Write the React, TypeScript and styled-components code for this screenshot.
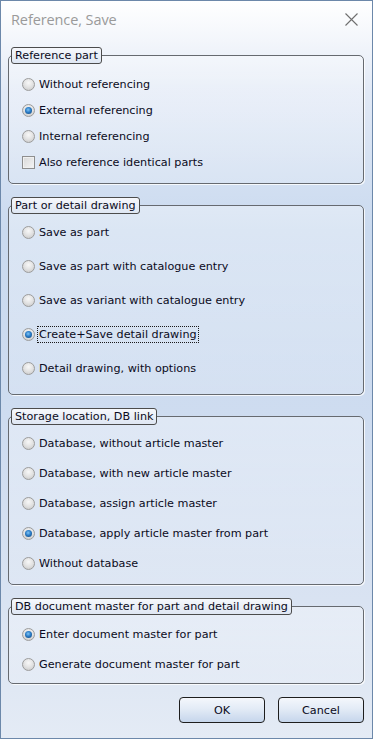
import React, { useState } from 'react'
import styled, { createGlobalStyle } from 'styled-components'

const GlobalStyles = createGlobalStyle`
	html, body {
		margin: 0;
		padding: 0;
		background: #ffffff;
	}
	* {
		box-sizing: border-box;
	}
`

const Window = styled.div`
	width: 373px;
	height: 739px;
	border: 1px solid #6c88aa;
	display: flex;
	flex-direction: column;
	background: linear-gradient(
		to bottom,
		#ffffff 0px,
		#f3f6fb 40px,
		#e1e9f6 90px,
		#cadaef 230px,
		#cedcf0 420px,
		#d9e3f2 600px,
		#e4ebf5 739px
	);
	font-family: 'DejaVu Sans', 'Liberation Sans', sans-serif;
	font-size: 11.2px;
	color: #0b0b22;
	overflow: hidden;
`

const TitleBar = styled.div`
	height: 38px;
	flex: none;
	display: flex;
	align-items: center;
	justify-content: space-between;
	padding: 0 14px 1px 10px;
`

const Title = styled.span`
	font-family: 'Open Sans', 'Liberation Sans', sans-serif;
	font-size: 14.5px;
	color: #9a9a9a;
	letter-spacing: -0.1px;
`

const CloseIcon = styled.svg`
	width: 13px;
	height: 13px;
	stroke: #6e6e6e;
	stroke-width: 1.1;
`

const Body = styled.div`
	flex: 1;
	display: flex;
	flex-direction: column;
	padding: 8px 8px 0 7px;
`

const Group = styled.section`
	display: flex;
	flex-direction: column;
	margin-bottom: 13px;
`

const Legend = styled.div`
	align-self: flex-start;
	height: 17px;
	margin-left: 3px;
	padding: 0 3px;
	display: flex;
	align-items: center;
	border: 1px solid #4c4c4c;
	border-radius: 3px;
	background: linear-gradient(to bottom, #f6f8fc, #dfe7f3);
	position: relative;
	z-index: 1;
	white-space: nowrap;
`

const Box = styled.div<{ $padTop: number; $padBottom: number }>`
	margin-top: -9px;
	border: 1px solid #666a70;
	border-radius: 5px;
	box-shadow: 1px 1px 0 rgba(255, 255, 255, 0.8);
	background: linear-gradient(
		to bottom,
		rgba(255, 255, 255, 0.35),
		rgba(255, 255, 255, 0.15)
	);
	padding: ${({ $padTop, $padBottom }) => `${$padTop}px 10px ${$padBottom}px 13px`};
	display: flex;
	flex-direction: column;
`

const Row = styled.label<{ $pitch: number }>`
	height: ${({ $pitch }) => $pitch}px;
	display: flex;
	align-items: center;
	gap: 3px;
	white-space: nowrap;
`

const RadioDot = styled.span<{ $on?: boolean }>`
	width: 13px;
	height: 13px;
	flex: none;
	border-radius: 50%;
	border: 1px solid #9c9c9c;
	background: radial-gradient(circle at 50% 35%, #f8f8f8 0%, #e2e2e2 50%, #c4c4c4 100%);
	display: flex;
	align-items: center;
	justify-content: center;

	&::after {
		content: '';
		display: ${({ $on }) => ($on ? 'block' : 'none')};
		width: 7px;
		height: 7px;
		border-radius: 50%;
		background: radial-gradient(circle at 45% 40%, #7fc4f5 0%, #2a7cc7 45%, #113e6e 100%);
	}
`

const CheckBox = styled.span`
	width: 13px;
	height: 13px;
	flex: none;
	border: 1px solid #8e8e8e;
	background: linear-gradient(135deg, #d8d8d8, #f5f5f5);
	box-shadow: inset 0 0 0 1px #f0f0f0;
`

const Label = styled.span<{ $focus?: boolean }>`
	padding: 1px;
	outline: ${({ $focus }) => ($focus ? '1px dotted #1a1a1a' : 'none')};
`

const Buttons = styled.div`
	display: flex;
	justify-content: flex-end;
	gap: 13px;
`

const Button = styled.button`
	width: 86px;
	height: 26px;
	border: 1px solid #1e1e1e;
	border-radius: 4px;
	background: linear-gradient(to bottom, #f4f7fc 0%, #e3ebf6 45%, #c6d6ec 100%);
	font-family: 'DejaVu Sans', 'Liberation Sans', sans-serif;
	font-size: 11.2px;
	color: #0b0b22;
	padding: 0;
`

type Opt = { label: string; kind?: 'check' }

const groups: {
	title: string
	pitch: number
	padTop: number
	padBottom: number
	options: Opt[]
	selected: number
}[] = [
	{
		title: 'Reference part',
		pitch: 26,
		padTop: 15,
		padBottom: 8,
		selected: 1,
		options: [
			{ label: 'Without referencing' },
			{ label: 'External referencing' },
			{ label: 'Internal referencing' },
			{ label: 'Also reference identical parts', kind: 'check' },
		],
	},
	{
		title: 'Part or detail drawing',
		pitch: 34,
		padTop: 9,
		padBottom: 9,
		selected: 3,
		options: [
			{ label: 'Save as part' },
			{ label: 'Save as part with catalogue entry' },
			{ label: 'Save as variant with catalogue entry' },
			{ label: 'Create+Save detail drawing' },
			{ label: 'Detail drawing, with options' },
		],
	},
	{
		title: 'Storage location, DB link',
		pitch: 30,
		padTop: 11,
		padBottom: 6,
		selected: 3,
		options: [
			{ label: 'Database, without article master' },
			{ label: 'Database, with new article master' },
			{ label: 'Database, assign article master' },
			{ label: 'Database, apply article master from part' },
			{ label: 'Without database' },
		],
	},
	{
		title: 'DB document master for part and detail drawing',
		pitch: 30,
		padTop: 12,
		padBottom: 4,
		selected: 0,
		options: [
			{ label: 'Enter document master for part' },
			{ label: 'Generate document master for part' },
		],
	},
]

const App: React.FC = () => {
	const [selection, setSelection] = useState(groups.map((g) => g.selected))

	return (
		<>
			<GlobalStyles />
			<Window>
				<TitleBar>
					<Title>Reference, Save</Title>
					<CloseIcon viewBox="0 0 13 13">
						<path d="M0.5 0.5 L12.5 12.5 M12.5 0.5 L0.5 12.5" />
					</CloseIcon>
				</TitleBar>
				<Body>
					{groups.map((g, gi) => (
						<Group key={g.title}>
							<Legend>{g.title}</Legend>
							<Box $padTop={g.padTop} $padBottom={g.padBottom}>
								{g.options.map((o, oi) => (
									<Row
										key={o.label}
										$pitch={g.pitch}
										onClick={() =>
											o.kind !== 'check' &&
											setSelection((s) => s.map((v, i) => (i === gi ? oi : v)))
										}
									>
										{o.kind === 'check' ? (
											<CheckBox />
										) : (
											<RadioDot $on={selection[gi] === oi} />
										)}
										<Label $focus={gi === 1 && oi === 3}>{o.label}</Label>
									</Row>
								))}
							</Box>
						</Group>
					))}
					<Buttons>
						<Button>OK</Button>
						<Button>Cancel</Button>
					</Buttons>
				</Body>
			</Window>
		</>
	)
}

export default App
